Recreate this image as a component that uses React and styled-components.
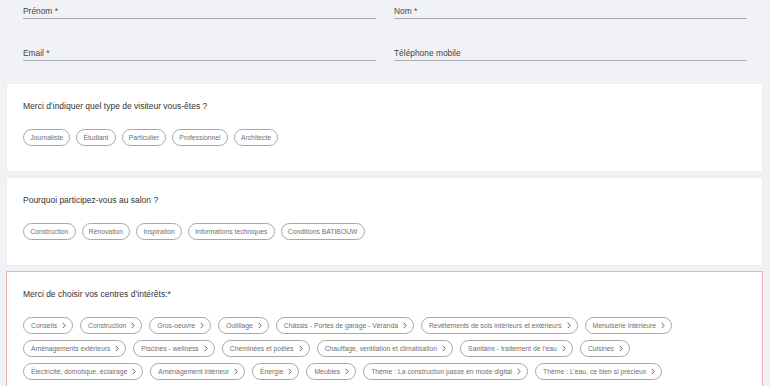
import React from 'react';
import styled, { createGlobalStyle } from 'styled-components';

const GlobalStyle = createGlobalStyle`
  body {
    margin: 0;
    background: #f1f2f6;
    font-family: "Liberation Sans", Arial, sans-serif;
    color: #333;
  }
`;

const Page = styled.div`
  width: 770px;
  height: 386px;
  overflow: hidden;
`;

const Fields = styled.div`
  display: grid;
  grid-template-columns: 353px 353px;
  column-gap: 18px;
  row-gap: 29px;
  padding: 6px 23px 22px 23px;
`;

const Field = styled.div`
  font-size: 8.4px;
  line-height: 10px;
  color: #444;
  padding-bottom: 2px;
  border-bottom: 1px solid #a9abb0;
`;

const Cards = styled.div`
  display: flex;
  flex-direction: column;
  gap: 5px;
  padding: 0 7px 0 6px;
`;

const Card = styled.section`
  background: #fff;
  border: 1px solid ${(p) => (p.$error ? '#f4b0b0' : '#eceef2')};
  padding: 17px 16px 25px 16px;
`;

const Question = styled.div`
  font-size: 8.5px;
  line-height: 10px;
  color: #333;
  margin-bottom: 18px;
`;

const ChipList = styled.div`
  display: flex;
  flex-wrap: wrap;
  column-gap: ${(p) => (p.$wide ? '7px' : '6px')};
  row-gap: 6px;
`;

const Chip = styled.button`
  display: inline-flex;
  align-items: center;
  gap: 5px;
  height: 17px;
  box-sizing: border-box;
  padding: ${(p) => (p.$arrow ? '0 6px 0 7px' : '0 6.2px')};
  border: 1px solid #a8a8a8;
  border-radius: 9px;
  background: #fff;
  font-family: "Liberation Sans", Arial, sans-serif;
  font-size: 6.8px;
  color: #707070;
  white-space: nowrap;
  cursor: pointer;
`;

const Chevron = () => (
  <svg width="4" height="7" viewBox="0 0 4 7">
    <path d="M0.7 0.8 L3.2 3.5 L0.7 6.2" fill="none" stroke="#666" strokeWidth="1" />
  </svg>
);

const visitors = ['Journaliste', 'Étudiant', 'Particulier', 'Professionnel', 'Architecte'];
const reasons = ['Construction', 'Rénovation', 'Inspiration', 'Informations techniques', 'Conditions BATIBOUW'];
const interests = [
  'Conseils',
  'Construction',
  'Gros-oeuvre',
  'Outillage',
  'Châssis - Portes de garage - Véranda',
  'Revêtements de sols intérieurs et extérieurs',
  'Menuiserie intérieure',
  'Aménagements extérieurs',
  'Piscines - wellness',
  'Cheminées et poêles',
  'Chauffage, ventilation et climatisation',
  'Sanitaire - traitement de l\u2019eau',
  'Cuisines',
  'Électricité, domotique, éclairage',
  'Aménagement intérieur',
  'Énergie',
  'Meubles',
  'Thème : La construction passe en mode digital',
  'Thème : L\u2019eau, ce bien si précieux',
];

export default function App() {
  return (
    <Page>
      <GlobalStyle />
      <Fields>
        <Field>Prénom *</Field>
        <Field>Nom *</Field>
        <Field>Email *</Field>
        <Field>Téléphone mobile</Field>
      </Fields>
      <Cards>
        <Card>
          <Question>Merci d’indiquer quel type de visiteur vous-êtes ?</Question>
          <ChipList>
            {visitors.map((v) => (
              <Chip key={v}>{v}</Chip>
            ))}
          </ChipList>
        </Card>
        <Card>
          <Question>Pourquoi participez-vous au salon ?</Question>
          <ChipList>
            {reasons.map((r) => (
              <Chip key={r}>{r}</Chip>
            ))}
          </ChipList>
        </Card>
        <Card $error>
          <Question>Merci de choisir vos centres d’intérêts:*</Question>
          <ChipList $wide>
            {interests.map((i) => (
              <Chip key={i} $arrow>
                {i}
                <Chevron />
              </Chip>
            ))}
          </ChipList>
        </Card>
      </Cards>
    </Page>
  );
}
